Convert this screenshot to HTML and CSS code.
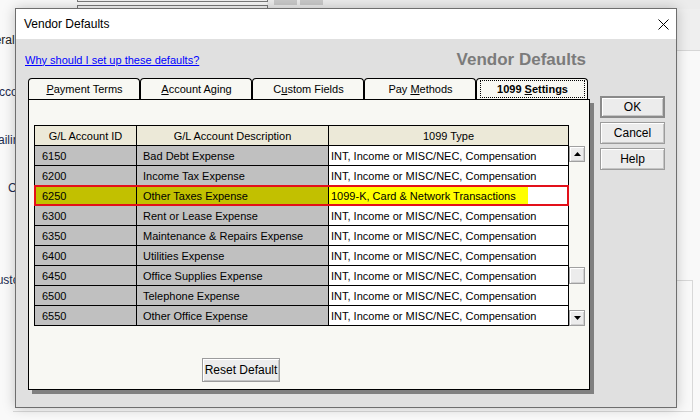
FILE: index.html
```html
<!DOCTYPE html>
<html>
<head>
<meta charset="utf-8">
<title>Vendor Defaults</title>
<link rel="stylesheet" href="styles.css">
</head>
<body>
<div class="desk">
  <div class="bg-top"></div>
  <div class="bg-box1"></div>
  <div class="bg-box2"></div>
  <div class="bg-sq sq1"></div>
  <div class="bg-sq sq2"></div>
  <div class="bg-right"></div>
  <div class="bg-frame"></div>
  <span class="frag f1">General</span>
  <span class="frag f2">Account</span>
  <span class="frag f3">Mailing</span>
  <span class="frag f4">Contact</span>
  <span class="frag f5">Customer</span>

  <div class="dlg">
    <div class="titlebar">
      <span class="title">Vendor Defaults</span>
      <svg class="close" width="11" height="11" viewBox="0 0 11 11"><path d="M0.5 0.5 L10.5 10.5 M10.5 0.5 L0.5 10.5" stroke="#000" stroke-width="1" fill="none"/></svg>
    </div>
    <div class="dlg-body">
      <div class="top-row">
        <a class="link" href="#">Why should I set up these defaults?</a>
        <div class="hdr">Vendor Defaults</div>
      </div>
      <div class="main">
        <div class="tabarea">
          <div class="tabs">
            <div class="tab"><span class="lbl"><u>P</u>ayment Terms</span></div>
            <div class="tab"><span class="lbl"><u>A</u>ccount Aging</span></div>
            <div class="tab"><span class="lbl">C<u>u</u>stom Fields</span></div>
            <div class="tab"><span class="lbl">Pay <u>M</u>ethods</span></div>
            <div class="tab sel"><span class="lbl">1099 <u>S</u>ettings</span></div>
          </div>
          <div class="panel">
            <div class="tablewrap">
              <div class="grid">
                <div class="row head"><div class="c c1">G/L Account ID</div><div class="c c2">G/L Account Description</div><div class="c c3">1099 Type</div></div>
                <div class="row"><div class="c c1">6150</div><div class="c c2">Bad Debt Expense</div><div class="c c3">INT, Income or MISC/NEC, Compensation</div></div>
                <div class="row"><div class="c c1">6200</div><div class="c c2">Income Tax Expense</div><div class="c c3">INT, Income or MISC/NEC, Compensation</div></div>
                <div class="row sel"><div class="c c1">6250</div><div class="c c2">Other Taxes Expense</div><div class="c c3"><span class="hl">1099-K, Card &amp; Network Transactions</span></div></div>
                <div class="row"><div class="c c1">6300</div><div class="c c2">Rent or Lease Expense</div><div class="c c3">INT, Income or MISC/NEC, Compensation</div></div>
                <div class="row"><div class="c c1">6350</div><div class="c c2">Maintenance &amp; Repairs Expense</div><div class="c c3">INT, Income or MISC/NEC, Compensation</div></div>
                <div class="row"><div class="c c1">6400</div><div class="c c2">Utilities Expense</div><div class="c c3">INT, Income or MISC/NEC, Compensation</div></div>
                <div class="row"><div class="c c1">6450</div><div class="c c2">Office Supplies Expense</div><div class="c c3">INT, Income or MISC/NEC, Compensation</div></div>
                <div class="row"><div class="c c1">6500</div><div class="c c2">Telephone Expense</div><div class="c c3">INT, Income or MISC/NEC, Compensation</div></div>
                <div class="row"><div class="c c1">6550</div><div class="c c2">Other Office Expense</div><div class="c c3">INT, Income or MISC/NEC, Compensation</div></div>
              </div>
              <div class="vscroll">
                <div class="sbtn"><svg width="7" height="4" viewBox="0 0 7 4"><polygon points="3.5,0 7,4 0,4" fill="#000"/></svg></div>
                <div class="track"><div class="thumb"></div></div>
                <div class="sbtn"><svg width="7" height="4" viewBox="0 0 7 4"><polygon points="0,0 7,0 3.5,4" fill="#000"/></svg></div>
              </div>
            </div>
            <button class="btn reset">Reset Default</button>
          </div>
        </div>
        <div class="sidebtns">
          <button class="btn side ok">OK</button>
          <button class="btn side">Cancel</button>
          <button class="btn side">Help</button>
        </div>
      </div>
    </div>
  </div>
</div>
</body>
</html>
```

FILE: styles.css
```css
* { box-sizing: border-box; }
html, body { margin: 0; padding: 0; }
body {
  background: #f8f8f8;
  font-family: "Liberation Sans", Arial, sans-serif;
  font-size: 11px;
  color: #000;
}
.desk {
  position: relative;
  width: 700px;
  height: 420px;
  overflow: hidden;
  background: #f9f9f9;
}

/* background windows (desktop canvas) */
.bg-top { position: absolute; left: 267px; top: 0; width: 433px; height: 9px; background: #ececec; }
.bg-box1 { position: absolute; left: 77px; top: -10px; width: 191px; height: 12px; border: 1px solid #7a7a7a; background: #f2f2f2; }
.bg-box2 { position: absolute; left: 77px; top: 5px; width: 191px; height: 20px; border: 1px solid #7a7a7a; background: #f5f5f5; }
.bg-sq { position: absolute; top: 0; width: 23px; height: 5px; background: #c9c9c9; }
.sq1 { left: 274px; }
.sq2 { left: 300px; }
.bg-right { position: absolute; left: 677px; top: 9px; width: 23px; height: 42px; background: #efefef; border-bottom: 1px solid #d6d6d6; }
.bg-frame { position: absolute; left: 13px; top: 280px; width: 680px; height: 132px; border: 1px solid #d8d8d8; border-left: none; }
.frag {
  position: absolute;
  font-family: "Liberation Sans", Arial, sans-serif;
  font-size: 12px;
  color: #1c2b4f;
  white-space: nowrap;
}
.f1 { left: -28px; top: 33px; color: #222; }
.f2 { left: -9px; top: 85px; }
.f3 { left: -12px; top: 133px; }
.f4 { left: 8px; top: 181px; }
.f5 { left: -12px; top: 273px; }

/* dialog */
.dlg {
  position: absolute;
  left: 15px;
  top: 8px;
  width: 662px;
  height: 400px;
  border: 1px solid #6e6e6e;
  background: #e0e0e0;
  box-shadow: 0 0 12px rgba(0, 0, 0, 0.22);
  display: flex;
  flex-direction: column;
}
.titlebar {
  height: 30px;
  background: #fff;
  display: flex;
  align-items: center;
  justify-content: space-between;
  padding: 0 7px 0 8px;
  flex: none;
}
.title {
  font-family: "Liberation Sans", Arial, sans-serif;
  font-size: 12px;
  color: #000;
}
.close { display: block; }

.dlg-body { flex: 1; display: flex; flex-direction: column; }
.top-row {
  height: 39px;
  width: 570px;
  display: flex;
  align-items: center;
  justify-content: space-between;
  padding: 2px 0 0 9px;
}
.link { color: #0000ff; text-decoration: underline; font-size: 11px; }
.hdr {
  font-family: "Liberation Sans", Arial, sans-serif;
  font-weight: bold;
  font-size: 17px;
  color: #7b7b7b;
}

.main { display: flex; padding-left: 12px; }
.tabarea { width: 562px; }
.tabs { display: flex; height: 21px; }
.tab {
  width: 112px;
  height: 21px;
  border: 1px solid #000;
  border-bottom: none;
  border-radius: 4px 4px 0 0;
  background: #f8f8f3;
  display: flex;
  padding: 1px 2px 1px 3px;
}
.tab .lbl {
  flex: 1;
  display: flex;
  align-items: center;
  justify-content: center;
  border: 1px dotted transparent;
  white-space: pre;
}
.tab.sel .lbl { border-color: #000; font-weight: bold; }

.panel {
  height: 291px;
  border: 1px solid #000;
  background: #f8f8f3;
  box-shadow: 4px 4px 0 #808080;
  padding: 25px 0 0 5px;
}
.tablewrap { display: flex; align-items: flex-start; }
.grid {
  width: 535px;
  border-left: 1px solid #000;
  border-top: 1px solid #000;
}
.row {
  display: grid;
  grid-template-columns: 102px 192px 240px;
  height: 20px;
}
.c {
  border-right: 1px solid #000;
  border-bottom: 1px solid #000;
  display: flex;
  align-items: center;
  white-space: nowrap;
  overflow: hidden;
}
.c1 { background: #c0c0c0; padding-left: 7px; }
.c2 { background: #c0c0c0; padding-left: 6px; }
.c3 { background: #fff; padding-left: 2px; }
.row.head .c { background: #ece9d8; justify-content: center; padding-left: 0; }
.row.sel { position: relative; }
.row.sel .c1, .row.sel .c2 { background: #c2c000; }
.row.sel .c3 { padding-left: 0; }
.hl {
  background: #ffff00;
  height: 18px;
  display: inline-flex;
  align-items: center;
  padding: 0 12px 0 2px;
}
.row.sel::after {
  content: "";
  position: absolute;
  left: -1px;
  top: -1px;
  right: 0;
  bottom: 0;
  border: 2px solid #e3101a;
  pointer-events: none;
}

.vscroll {
  width: 16px;
  height: 180px;
  margin-top: 21px;
  display: flex;
  flex-direction: column;
}
.sbtn, .thumb {
  height: 16px;
  background: #ececec;
  border: 1px solid #a0a0a0;
  box-shadow: inset 1px 1px #fff, inset -1px -1px #d0d0d0;
  display: flex;
  align-items: center;
  justify-content: center;
}
.sbtn svg { display: block; }
.track { flex: 1; }
.thumb { height: 17px; margin-top: 105px; }

.btn {
  font-family: inherit;
  font-size: 11px;
  color: #000;
  background: #ececec;
  border: 1px solid #9c9c9c;
  box-shadow: inset 1px 1px #fff, inset -1px -1px #c4c4c4;
  padding: 0;
  border-radius: 0;
  white-space: nowrap;
}
.reset {
  display: block;
  width: 78px;
  height: 24px;
  margin: 32px 0 0 168px;
  font-size: 12px;
}
.sidebtns {
  margin: 18px 0 0 10px;
  display: flex;
  flex-direction: column;
  gap: 4px;
}
.side { width: 65px; height: 22px; font-size: 12px; }
.ok { border: 2px solid #8a8a8a; }
```
